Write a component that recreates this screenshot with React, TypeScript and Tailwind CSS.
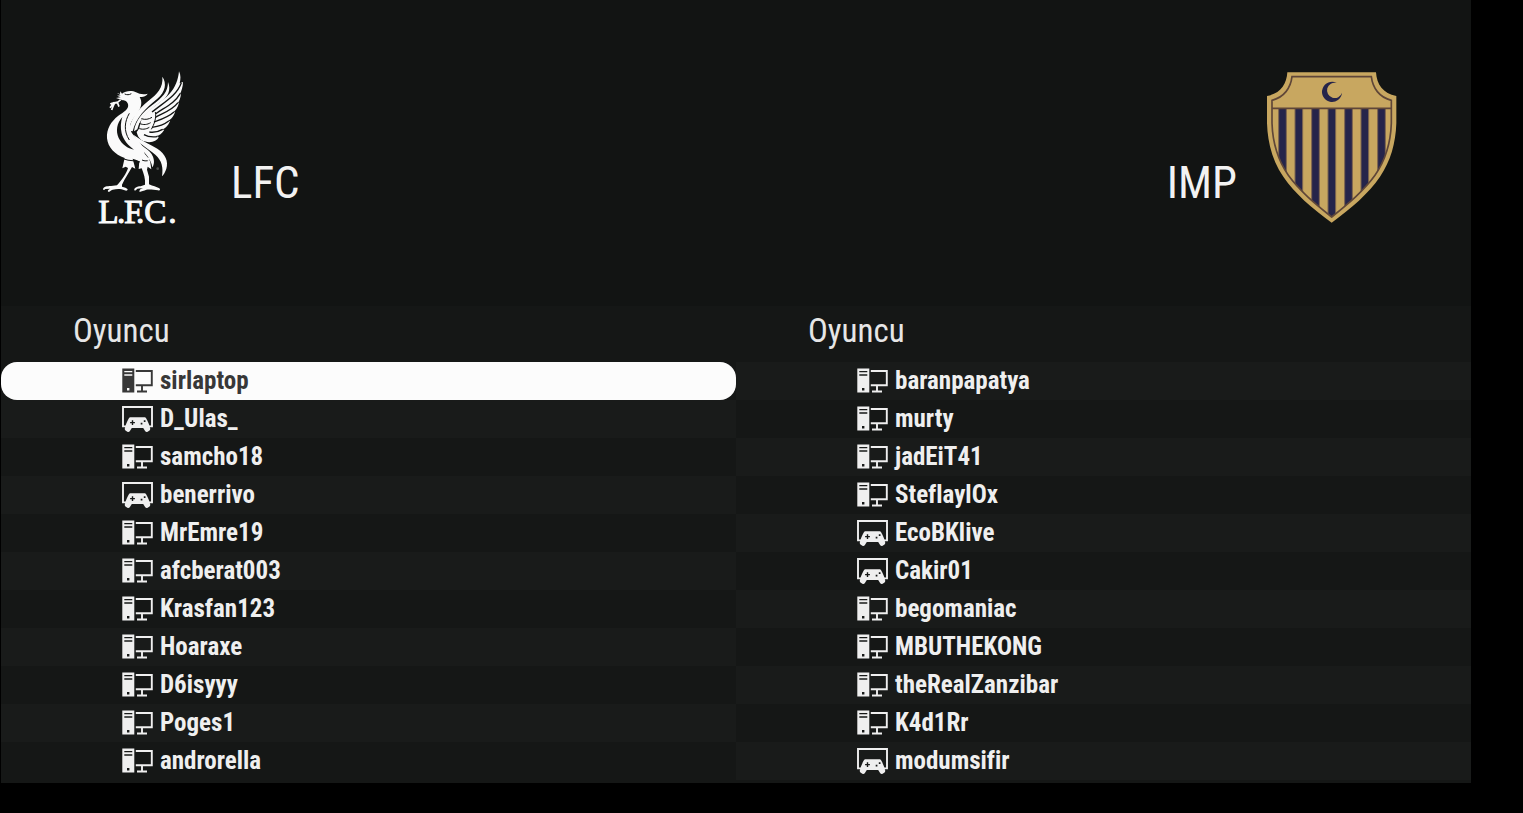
import { useState } from 'react';
import clsx from 'clsx';

type Device = 'pc' | 'console';

interface Player {
  name: string;
  device: Device;
}

const homePlayers: Player[] = [
  { name: 'sirlaptop', device: 'pc' },
  { name: 'D_Ulas_', device: 'console' },
  { name: 'samcho18', device: 'pc' },
  { name: 'benerrivo', device: 'console' },
  { name: 'MrEmre19', device: 'pc' },
  { name: 'afcberat003', device: 'pc' },
  { name: 'Krasfan123', device: 'pc' },
  { name: 'Hoaraxe', device: 'pc' },
  { name: 'D6isyyy', device: 'pc' },
  { name: 'Poges1', device: 'pc' },
  { name: 'androrella', device: 'pc' },
];

const awayPlayers: Player[] = [
  { name: 'baranpapatya', device: 'pc' },
  { name: 'murty', device: 'pc' },
  { name: 'jadEiT41', device: 'pc' },
  { name: 'SteflaylOx', device: 'pc' },
  { name: 'EcoBKlive', device: 'console' },
  { name: 'Cakir01', device: 'console' },
  { name: 'begomaniac', device: 'pc' },
  { name: 'MBUTHEKONG', device: 'pc' },
  { name: 'theRealZanzibar', device: 'pc' },
  { name: 'K4d1Rr', device: 'pc' },
  { name: 'modumsifir', device: 'console' },
];

const PcIcon = () => (
  <svg className="w-[31px] h-[26px] shrink-0" viewBox="0 0 31 26" fill="none" aria-hidden="true">
    <path
      fill="currentColor"
      fillRule="evenodd"
      d="M.3.5h12v24H.3zM2.300 3v1.300h8V3zM2.300 6.300v1.400h8V6.300zM5 20v2.400h2.400V20z"
    />
    <path stroke="currentColor" strokeWidth="1.9" d="M13.800 3h16v14.200h-16M20 17.500v6M15 23.500h10" />
  </svg>
);

const ConsoleIcon = () => (
  <svg className="w-[31px] h-[26px] shrink-0" viewBox="0 0 31 26" fill="none" aria-hidden="true">
    <path stroke="currentColor" strokeWidth="1.9" d="M4 20.400H1V1h29v19.400h-3" />
    <path
      fill="currentColor"
      fillRule="evenodd"
      d="M6.900 12.300c.4-.8 1-1.100 1.800-1.100h13.600c.8 0 1.400.3 1.800 1.100C26 15.500 27.400 19 28.200 22.600c.2 1-.2 1.700-1 2.200l-1.600.9c-1 .5-1.900.1-2.500-.8L21.200 22H9.800l-1.900 2.900c-.6.9-1.500 1.300-2.500.8L3.800 24.800c-.8-.5-1.200-1.200-1-2.200C3.600 19 5 15.500 6.900 12.300zM9.800 14.200v1.700H8.100v1.400h1.700V19h1.400v-1.700h1.700v-1.400h-1.700v-1.700zM21.800 14.300V16h1.700v-1.700zM18.700 16.800v1.700h1.700v-1.700z"
    />
  </svg>
);

const LiverBird = () => (
  <svg className="w-[88px] h-[156px] shrink-0 overflow-visible" viewBox="54 30 264 468" role="img" aria-label="L.F.C.">
    {/* wing */}
    <g fill="#fafafa">
      <path d="M148 212C150 180 172 150 204 124C232 101 250 84 247 50C261 70 256 96 232 116C198 144 168 172 158 214Z" />
      <path d="M162 214C166 184 186 158 216 136C248 112 264 96 264 66C274 90 264 110 244 124C212 148 180 172 172 208Z" />
      <path d="M188 172C210 142 246 126 268 102C286 82 294 62 297 34C303 46 302 58 299 70L309 66C309 80 304 94 300 102L303 101C302 114 297 124 293 130L297 128C294 142 286 152 280 157L285 156C280 172 270 180 262 184L270 183C264 199 254 206 244 209L253 209C246 221 238 226 228 228L236 231C230 246 206 252 184 240C176 234 172 226 170 216C182 206 178 190 188 172Z" />
    </g>
    <g fill="none" stroke="#121413" strokeWidth="4">
      <path d="M304 68C290 108 250 128 216 156" />
      <path d="M301 100C284 130 254 142 226 162" />
      <path d="M294 128C278 150 252 158 226 172" />
      <path d="M282 156C264 172 244 178 222 186" />
      <path d="M266 183C250 196 232 200 216 202" />
      <path d="M248 208C234 216 220 218 208 216" />
      <path d="M232 230C216 232 202 230 192 224" />
      <path d="M226 156C230 174 222 194 214 208" strokeWidth="3" />
      <path d="M184 176C196 180 206 178 216 172M178 190C190 196 202 194 212 188M174 204C186 210 198 208 208 202" strokeWidth="3" />
    </g>
    {/* head, neck and breast */}
    <path
      fill="#fafafa"
      d="M110 98L120 102L121 94L126 101C137 91 158 91 168 97C178 102 190 105 203 101C198 110 188 111 179 111C188 126 184 143 173 158C158 178 146 190 152 212C156 222 166 231 174 240C186 252 193 272 196 291L209 294L214 328L203 320L201 329L207 350L207 373C219 379 229 380 238 385C242 389 240 393 234 391C222 389 208 387 199 389C192 392 184 393 179 396C176 389 184 386 190 384L172 386C168 389 167 393 163 391C161 384 171 379 182 379L195 374C197 357 191 341 185 325L176 327L178 304C171 300 163 298 158 296L166 326L156 321C146 339 134 357 126 374L126 380C134 382 140 384 143 388C143 392 139 393 134 391C122 386 111 387 98 389C92 391 88 397 84 395C82 391 86 388 91 386L76 387C73 390 70 391 69 387C71 380 81 378 93 378L111 376C126 359 140 339 144 324L137 320L127 325L134 294C104 284 84 262 81 235C79 206 94 184 114 168C131 156 148 148 144 132C141 122 131 121 126 120L108 114L122 112L111 107L122 106Z"
    />
    <path fill="#121413" d="M127 171C110 190 107 213 116 234C126 254 143 265 162 269C145 257 130 240 125 220C121 202 122 188 127 171Z" />
    <path fill="none" stroke="#121413" strokeWidth="3" d="M134 102C141 105 147 105 154 101M148 160C134 184 130 212 148 240" />
    <path fill="none" stroke="#121413" strokeWidth="3" d="M132 297C148 304 164 300 180 306M186 300C194 304 202 303 209 300" />
    {/* sprig */}
    <path fill="none" stroke="#fafafa" strokeWidth="5" d="M122 119C112 132 101 126 91 132M106 127C98 137 98 143 95 150M112 127L117 140M103 127L90 143" />
    {/* tail */}
    <g fill="#fafafa">
      <path d="M160 224C188 244 212 254 232 266C256 282 266 304 259 326C256 336 251 344 246 349C250 322 246 302 226 284C202 264 174 250 160 224Z" />
      <path d="M164 238C184 260 210 268 219 290C224 304 222 314 217 322C213 298 198 282 184 268C174 258 167 250 164 238Z" />
      <path d="M176 270C194 278 206 290 210 312C202 296 190 292 180 286Z" />
      <circle cx="233" cy="326" r="4" fillOpacity="0.25" />
    </g>
    <text
      x="55 111 132 168 193 265"
      y="489"
      fontSize="100"
      fill="#fafafa"
      stroke="#fafafa"
      strokeWidth="3"
      className="font-['Liberation_Serif',serif]"
    >
      L.F.C.
    </text>
  </svg>
);

const ShieldCrest = () => (
  <svg className="w-[130px] h-[156px] shrink-0" viewBox="51 30 390 468" role="img" aria-label="IMP">
    <defs>
      <clipPath id="shield-field">
        <path d="M67 145H423V190C421 250 406 300 374 347C343 390 296 430 245 470C194 430 147 390 116 347C84 300 69 250 67 190Z" />
      </clipPath>
    </defs>
    <path
      fill="#c8a760"
      d="M112 37H378C380 73 399 101 439 108V190C437 250 422 304 390 350C356 400 304 445 245 488C186 445 134 400 100 350C68 304 53 250 51 190V108C91 101 110 73 112 37Z"
    />
    <g clipPath="url(#shield-field)" fill="#25244a" stroke="#7d6550" strokeWidth="3">
      <path d="M86 140h23v350h-23zM135 140h23v350h-23zM185 140h23v350h-23zM234 140h23v350h-23zM284 140h23v350h-23zM333 140h23v350h-23zM383 140h23v350h-23z" />
    </g>
    <path
      fill="none"
      stroke="#5f4638"
      strokeWidth="5"
      d="M126 50H364C368 84 388 112 424 121V190C422 250 407 300 375 346C342 392 296 430 245 471C194 430 148 392 115 346C83 300 68 250 66 190V121C102 112 122 84 126 50ZM67 145H423"
    />
    <path fill="#25244a" d="M260 69A30 30 0 1 0 276 98A23 23 0 1 1 260 69Z" />
  </svg>
);

interface PlayerListProps {
  players: Player[];
  stripe: 'odd' | 'even';
  selected: string | null;
  onSelect: (name: string) => void;
}

const PlayerList = ({ players, stripe, selected, onSelect }: PlayerListProps) => (
  <section>
    <h2 className="h-14 pl-[72px] pt-[7px] text-[33px] leading-[36px] text-[#e6e6e6]">Oyuncu</h2>
    <ul>
      {players.map((player, index) => {
        const active = player.name === selected;
        const light = stripe === 'odd' ? index % 2 === 0 : index % 2 === 1;
        return (
          <li key={player.name} className={light ? 'bg-[#191b1a]' : 'bg-[#151716]'}>
            <button
              type="button"
              onClick={() => onSelect(player.name)}
              className={clsx(
                'flex w-full h-[38px] items-center gap-[7px] pl-[121px] text-left text-[25px] leading-[30px] font-bold',
                active ? 'rounded-2xl bg-[#fcfcfc] text-[#383838]' : 'text-[#efefef]'
              )}
            >
              {player.device === 'pc' ? <PcIcon /> : <ConsoleIcon />}
              <span>{player.name}</span>
            </button>
          </li>
        );
      })}
    </ul>
  </section>
);

export default function App() {
  const [selected, setSelected] = useState<string | null>('sirlaptop');

  return (
    <div className="min-h-screen bg-black pl-px pr-[52px] pb-[30px] font-['Roboto_Condensed','Liberation_Sans_Narrow',sans-serif] [font-variant-ligatures:none]">
      <main className="bg-[#151716] pb-[3px]">
        {/* Teams */}
        <header className="flex items-start justify-between bg-[#121413] pl-[97px] pr-[74px] pt-[70px] pb-20">
          <div className="flex items-end gap-[45px]">
            <LiverBird />
            <h1 className="pb-[19px] text-[45px] leading-[48px] text-[#f2f2f2]">LFC</h1>
          </div>
          <div className="flex items-end gap-[30px]">
            <h1 className="pb-[19px] text-[45px] leading-[48px] text-[#f2f2f2]">IMP</h1>
            <ShieldCrest />
          </div>
        </header>
        {/* Line-ups */}
        <div className="grid grid-cols-2">
          <PlayerList players={homePlayers} stripe="even" selected={selected} onSelect={setSelected} />
          <PlayerList players={awayPlayers} stripe="odd" selected={selected} onSelect={setSelected} />
        </div>
      </main>
    </div>
  );
}
